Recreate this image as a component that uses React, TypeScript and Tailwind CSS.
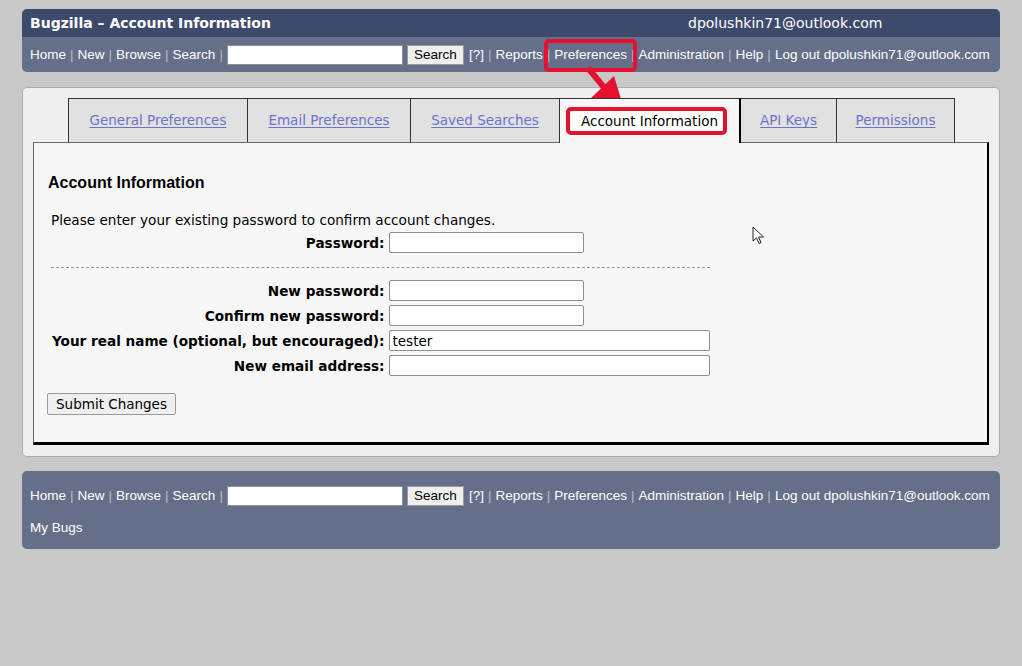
import React from "react";

const NAV_FONT = { fontFamily: '"Liberation Sans", Arial, sans-serif' };
const VERDANA = { fontFamily: '"DejaVu Sans", Verdana, sans-serif' };

const Sep = () => <span className="mx-[4px] text-[#b7bccb]">|</span>;

function NavRow({ highlight = false }: { highlight?: boolean }) {
  return (
    <div className="flex items-center whitespace-nowrap text-[13.5px] text-white" style={NAV_FONT}>
      <span>Home</span>
      <Sep />
      <span>New</span>
      <Sep />
      <span>Browse</span>
      <Sep />
      <span>Search</span>
      <Sep />
      <input
        className="block h-[20px] w-[176px] border border-[#8a8f9c] bg-white"
        type="text"
        readOnly
      />
      <button
        type="button"
        className="ml-[4px] h-[20px] w-[57px] shrink-0 border border-[#9a9a9a] bg-[#efefef] px-0 text-center text-[13.5px] leading-[18px] text-black"
        style={NAV_FONT}
      >
        Search
      </button>
      <span className="ml-[5px]">[?]</span>
      <Sep />
      <span>Reports</span>
      <Sep />
      <span className="relative">
        {highlight && (
          <span className="absolute -left-[10px] -right-[10px] -top-[6px] -bottom-[7px] rounded-[5px] border-[4px] border-[#e6112f]" />
        )}
        Preferences
      </span>
      <Sep />
      <span>Administration</span>
      <Sep />
      <span>Help</span>
      <Sep />
      <span>Log out dpolushkin71@outlook.com</span>
    </div>
  );
}

const TAB_LINK = "text-[13.5px] text-[#6b74c9] underline underline-offset-2";

export default function App() {
  return (
    <div className="relative min-h-[666px] bg-[#c8c8c8] px-[22px] pt-[9px] pb-[20px]">
      {/* header */}
      <div className="overflow-hidden rounded-[5px]">
        <div className="flex h-[28px] items-center bg-[#3e4a6c] px-[8px] pt-[1px] text-white" style={VERDANA}>
          <span className="w-[658px] text-[14px] font-bold">Bugzilla – Account Information</span>
          <span className="text-[14px]">dpolushkin71@outlook.com</span>
        </div>
        <div className="flex h-[35px] items-center bg-[#656f89] px-[8px] pt-[1px]">
          <NavRow highlight />
        </div>
      </div>

      {/* main panel */}
      <div className="mt-[15px] rounded-[5px] border border-[#a9a9a9] bg-[#efefef] px-[10px] pt-[10px] pb-[11px]" style={VERDANA}>
        <div className="flex pl-[35px]">
          <div className="flex h-[44px] w-[179px] items-center justify-center border-l border-t border-[#333] bg-[#e1e1e1]">
            <span className={TAB_LINK}>General Preferences</span>
          </div>
          <div className="flex h-[44px] w-[163px] items-center justify-center border-l border-t border-[#333] bg-[#e1e1e1]">
            <span className={TAB_LINK}>Email Preferences</span>
          </div>
          <div className="flex h-[44px] w-[149px] items-center justify-center border-l border-t border-[#333] bg-[#e1e1e1]">
            <span className={TAB_LINK}>Saved Searches</span>
          </div>
          <div className="relative z-10 -mb-[1px] flex h-[45px] w-[182px] items-center justify-center border-l border-t border-r-2 border-l-[#333] border-t-[#333] border-r-black bg-[#f7f7f7] pb-[1px]">
            <span className="relative leading-[16px]">
              <span className="absolute -left-[15px] -right-[9px] -top-[6px] -bottom-[6px] rounded-[5px] border-[4px] border-[#e6112f] bg-white" />
              <span className="relative text-[13.5px] leading-[16px] text-black">Account Information</span>
            </span>
          </div>
          <div className="flex h-[44px] w-[95px] items-center justify-center border-t border-[#333] bg-[#e1e1e1]">
            <span className={TAB_LINK}>API Keys</span>
          </div>
          <div className="flex h-[44px] w-[119px] items-center justify-center border-l border-t border-r border-[#333] bg-[#e1e1e1]">
            <span className={TAB_LINK}>Permissions</span>
          </div>
        </div>

        <div className="border-l border-t border-r-2 border-b-[3px] border-l-[#666] border-t-[#666] border-r-black border-b-black bg-[#f7f7f7] pl-[14px] pt-[30px] pb-[27px]">
          <h2 className="h-[20px] text-[16px] font-bold leading-[20px] text-black" style={NAV_FONT}>
            Account Information
          </h2>
          <div className="mt-[17px] ml-[4px] grid grid-cols-[auto_auto] justify-start gap-x-[4px] text-black">
            <div className="col-span-2 -ml-[1px] text-[13.6px] leading-[20px]">
              Please enter your existing password to confirm account changes.
            </div>
            <FormRow label="Password:" width="w-[195px]" />
            <div className="col-span-2 -ml-[1px] h-[23px] pt-[12px]">
              <div className="border-t border-dashed border-[#9a9a9a]" />
            </div>
            <FormRow label="New password:" width="w-[195px]" />
            <FormRow label="Confirm new password:" width="w-[195px]" />
            <FormRow label="Your real name (optional, but encouraged):" width="w-[321px]" value="tester" />
            <FormRow label="New email address:" width="w-[321px]" />
          </div>
          <button
            type="button"
            className="-ml-[1px] mt-[15px] block h-[22px] w-[129px] rounded-[2px] border border-[#999] bg-[#efefef] text-[13.5px] leading-[20px] text-black"
            style={VERDANA}
          >
            Submit Changes
          </button>
        </div>
      </div>

      {/* footer */}
      <div className="mt-[14px] rounded-[5px] bg-[#656f89] px-[8px] pt-[15px] pb-[13px]">
        <NavRow />
        <div className="mt-[14px] text-[13.5px] leading-[16px] text-white" style={NAV_FONT}>
          My Bugs
        </div>
      </div>

      {/* annotation arrow */}
      <svg className="pointer-events-none absolute left-0 top-0" width="1022" height="666">
        <line x1="588" y1="68" x2="607" y2="91" stroke="#e6112f" strokeWidth="6" strokeLinecap="butt" />
        <polygon points="590,99 614,76 624,109" fill="#e6112f" />
      </svg>

      {/* mouse cursor */}
      <svg className="pointer-events-none absolute left-[752px] top-[226px]" width="13" height="19" viewBox="0 0 13 19">
        <path d="M1 1 L1 15 L4.5 11.8 L7 17.5 L9 16.6 L6.6 11 L11.5 11 Z" fill="white" stroke="#222" strokeWidth="1" strokeLinejoin="round" />
      </svg>
    </div>
  );
}

function FormRow({ label, width, value = "" }: { label: string; width: string; value?: string }) {
  return (
    <>
      <div className="flex h-[25px] items-center justify-end text-[13.6px] font-bold leading-[16px] whitespace-nowrap">{label}</div>
      <div className="flex h-[25px] items-center">
        <input
          type="text"
          readOnly
          value={value}
          className={`block h-[21px] ${width} rounded-[2px] border border-[#8f8f8f] bg-white px-[3px] text-[13.5px] text-black`}
          style={VERDANA}
        />
      </div>
    </>
  );
}
